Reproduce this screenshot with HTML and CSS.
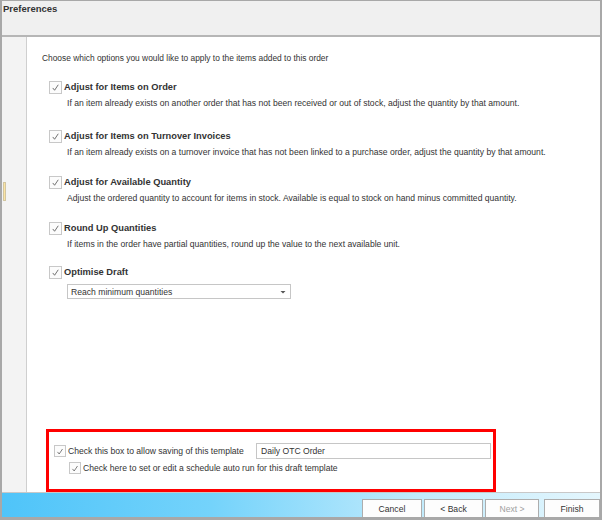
FILE: index.html
```html
<!DOCTYPE html>
<html lang="en">
<head>
  <meta charset="UTF-8" />
  <title>Preferences</title>
  <link rel="stylesheet" href="styles.css">
</head>
<body>
  <div class="window">
    <div class="header">Preferences</div>

    <div class="main">
      <div class="side">
        <div class="grip"></div>
      </div>

      <div class="content">
        <p class="intro">Choose which options you would like to apply to the items added to this order</p>

        <div class="option first">
          <label class="title"><span class="check"><svg viewBox="0 0 12 12"><polyline points="3,6.5 5,9 9,3"/></svg></span>Adjust for Items on Order</label>
          <p class="desc">If an item already exists on another order that has not been received or out of stock, adjust the quantity by that amount.</p>
        </div>

        <div class="option">
          <label class="title"><span class="check"><svg viewBox="0 0 12 12"><polyline points="3,6.5 5,9 9,3"/></svg></span>Adjust for Items on Turnover Invoices</label>
          <p class="desc">If an item already exists on a turnover invoice that has not been linked to a purchase order, adjust the quantity by that amount.</p>
        </div>

        <div class="option">
          <label class="title"><span class="check"><svg viewBox="0 0 12 12"><polyline points="3,6.5 5,9 9,3"/></svg></span>Adjust for Available Quantity</label>
          <p class="desc">Adjust the ordered quantity to account for items in stock. Available is equal to stock on hand minus committed quantity.</p>
        </div>

        <div class="option tight">
          <label class="title"><span class="check"><svg viewBox="0 0 12 12"><polyline points="3,6.5 5,9 9,3"/></svg></span>Round Up Quantities</label>
          <p class="desc">If items in the order have partial quantities, round up the value to the next available unit.</p>
        </div>

        <div class="option">
          <label class="title"><span class="check"><svg viewBox="0 0 12 12"><polyline points="3,6.5 5,9 9,3"/></svg></span>Optimise Draft</label>
          <div class="select">
            <span>Reach minimum quantities</span>
            <svg class="caret" viewBox="0 0 6 4"><polygon points="0.5,1 5.5,1 3,3.5"/></svg>
          </div>
        </div>

        <div class="template">
          <div class="row">
            <label class="small"><span class="check"><svg viewBox="0 0 12 12"><polyline points="3,6.5 5,9 9,3"/></svg></span>Check this box to allow saving of this template</label>
            <div class="textbox">Daily OTC Order</div>
          </div>
          <label class="small sub"><span class="check"><svg viewBox="0 0 12 12"><polyline points="3,6.5 5,9 9,3"/></svg></span>Check here to set or edit a schedule auto run for this draft template</label>
        </div>
      </div>
    </div>

    <div class="footer">
      <button class="cancel">Cancel</button>
      <button class="back">&lt; Back</button>
      <button class="next">Next &gt;</button>
      <button class="finish">Finish</button>
    </div>
  </div>
</body>
</html>
```

FILE: styles.css
```css
* {
  margin: 0;
  padding: 0;
  box-sizing: border-box;
}
body {
  width: 602px;
  height: 520px;
  font-family: 'Liberation Sans', Arial, sans-serif;
  font-size: 8.6px;
  color: #333;
  background: #a8a8a8;
}
.window {
  margin: 1px 2px 3px 2px;
  height: 516px;
  display: flex;
  flex-direction: column;
  background: #f0f0f0;
}
.header {
  height: 36px;
  padding: 2px 0 0 1px;
  font-weight: bold;
  font-size: 9.5px;
  border-bottom: 2px solid #b6b6b6;
  background: #f0f0f0;
}
.main {
  flex: 1;
  display: flex;
  border-bottom: 1px solid #c8c8c8;
}
.side {
  width: 25px;
  background: #f3f3f3;
  border-right: 1px solid #cfcfcf;
  padding-top: 145px;
}
.grip {
  width: 3px;
  height: 19px;
  margin-left: 1px;
  background: #fbe3a3;
  border: 1px solid #d2c6a0;
}
.content {
  flex: 1;
  background: #fff;
  display: flex;
  flex-direction: column;
  padding: 15px 0 0 15px;
}
.intro {
  font-size: 8.4px;
  line-height: 13px;
  margin-bottom: 14px;
}
.option {
  margin-left: 7px;
  margin-bottom: 14px;
}
.option.first {
  margin-bottom: 17px;
}
.option.tight {
  margin-bottom: 12px;
}
.title {
  display: flex;
  align-items: center;
  height: 16px;
  font-weight: bold;
  font-size: 9.3px;
  color: #333;
}
.check {
  width: 13px;
  height: 13px;
  margin-right: 2px;
  border: 1px solid #c8c8c8;
  background: #fcfcfc;
  display: inline-flex;
}
.check svg {
  width: 11px;
  height: 11px;
  fill: none;
  stroke: #666;
  stroke-width: 1;
}
.desc {
  margin-left: 18px;
  line-height: 16px;
}
.select {
  margin: 4px 0 0 18px;
  width: 224px;
  height: 15px;
  border: 1px solid #c6c6c6;
  display: flex;
  align-items: center;
  justify-content: space-between;
  padding: 0 4px 0 3px;
}
.caret {
  width: 6px;
  height: 4px;
  fill: #555;
}
.template {
  margin-top: auto;
  margin-left: 4px;
  width: 450px;
  height: 63px;
  border: 3px solid #ff0000;
  padding: 11px 0 0 5px;
}
.row {
  display: flex;
  align-items: center;
  height: 16px;
}
.small {
  display: flex;
  align-items: center;
  height: 14px;
}
.small .check {
  width: 12px;
  height: 12px;
}
.textbox {
  margin-left: auto;
  margin-right: 2px;
  width: 235px;
  height: 16px;
  border: 1px solid #c6c6c6;
  padding-left: 4px;
  line-height: 14px;
}
.sub {
  margin: 2px 0 0 15px;
}
.footer {
  height: 24px;
  display: flex;
  justify-content: flex-end;
  align-items: flex-end;
  background: linear-gradient(to right, #4fc4f9 0%, #74d3fb 35%, #c2ebfc 70%, #e4f6fd 100%);
}
button {
  height: 18px;
  font-family: 'Liberation Sans', Arial, sans-serif;
  font-size: 8.6px;
  color: #333;
  background: #fdfdfd;
  border: 1px solid #adadad;
  border-bottom: none;
}
.cancel {
  width: 60px;
}
.back {
  width: 59px;
  margin-left: 2px;
}
.next {
  width: 54px;
  margin-left: 2px;
  color: #a0a0a0;
}
.finish {
  width: 56px;
  margin-left: 5px;
}
```
